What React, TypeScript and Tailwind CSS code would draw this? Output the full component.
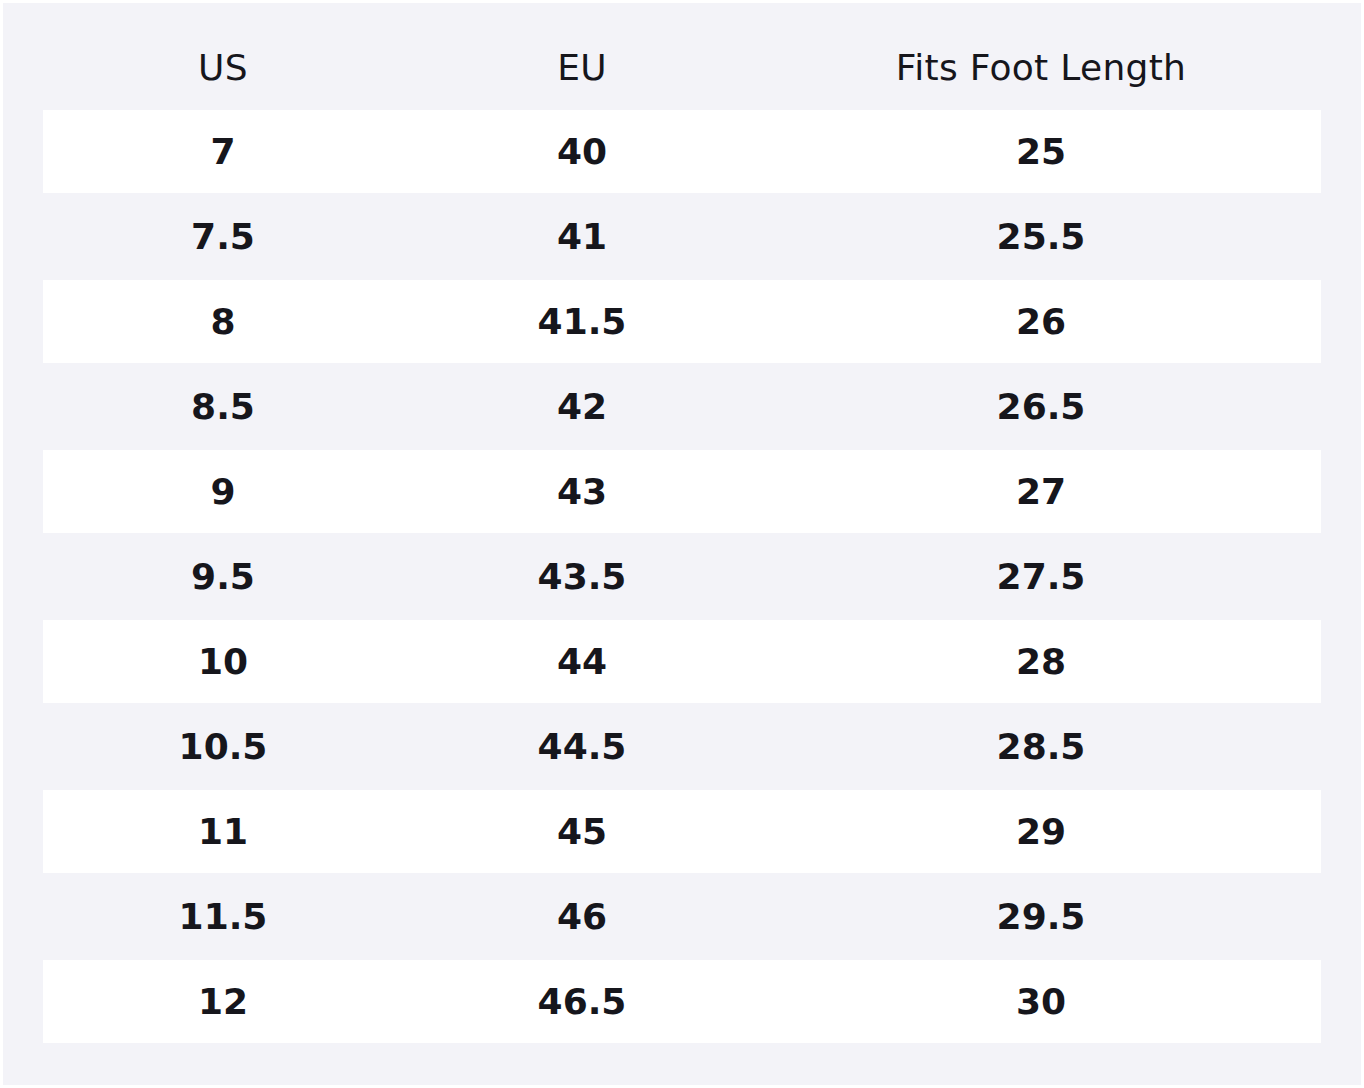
const rows = [
  ["7", "40", "25"],
  ["7.5", "41", "25.5"],
  ["8", "41.5", "26"],
  ["8.5", "42", "26.5"],
  ["9", "43", "27"],
  ["9.5", "43.5", "27.5"],
  ["10", "44", "28"],
  ["10.5", "44.5", "28.5"],
  ["11", "45", "29"],
  ["11.5", "46", "29.5"],
  ["12", "46.5", "30"],
]

export default function App() {
  return (
    <div className="min-h-screen w-full bg-white p-[3px] font-['DejaVu_Sans',sans-serif] text-[#16161c]">
      <div className="h-[1082px] w-[1358px] bg-[#f3f3f8] px-[40px] pt-[22px] pb-[40px]">
        {/* header */}
        <div className="grid h-[85px] grid-cols-[360px_358px_1fr] items-center text-center text-[36px] leading-none tracking-[0.3px]">
          <div>US</div>
          <div>EU</div>
          <div>Fits Foot Length</div>
        </div>

        {/* rows */}
        {rows.map((r, i) => (
          <div
            key={i}
            className={
              i % 2 === 0
                ? "grid h-[85px] grid-cols-[360px_358px_1fr] items-center border-b-2 border-[#f3f3f8] bg-white text-center text-[36px] font-bold leading-none"
                : "grid h-[85px] grid-cols-[360px_358px_1fr] items-center border-b-2 border-[#f3f3f8] text-center text-[36px] font-bold leading-none"
            }
          >
            <div>{r[0]}</div>
            <div>{r[1]}</div>
            <div>{r[2]}</div>
          </div>
        ))}
      </div>
    </div>
  )
}
